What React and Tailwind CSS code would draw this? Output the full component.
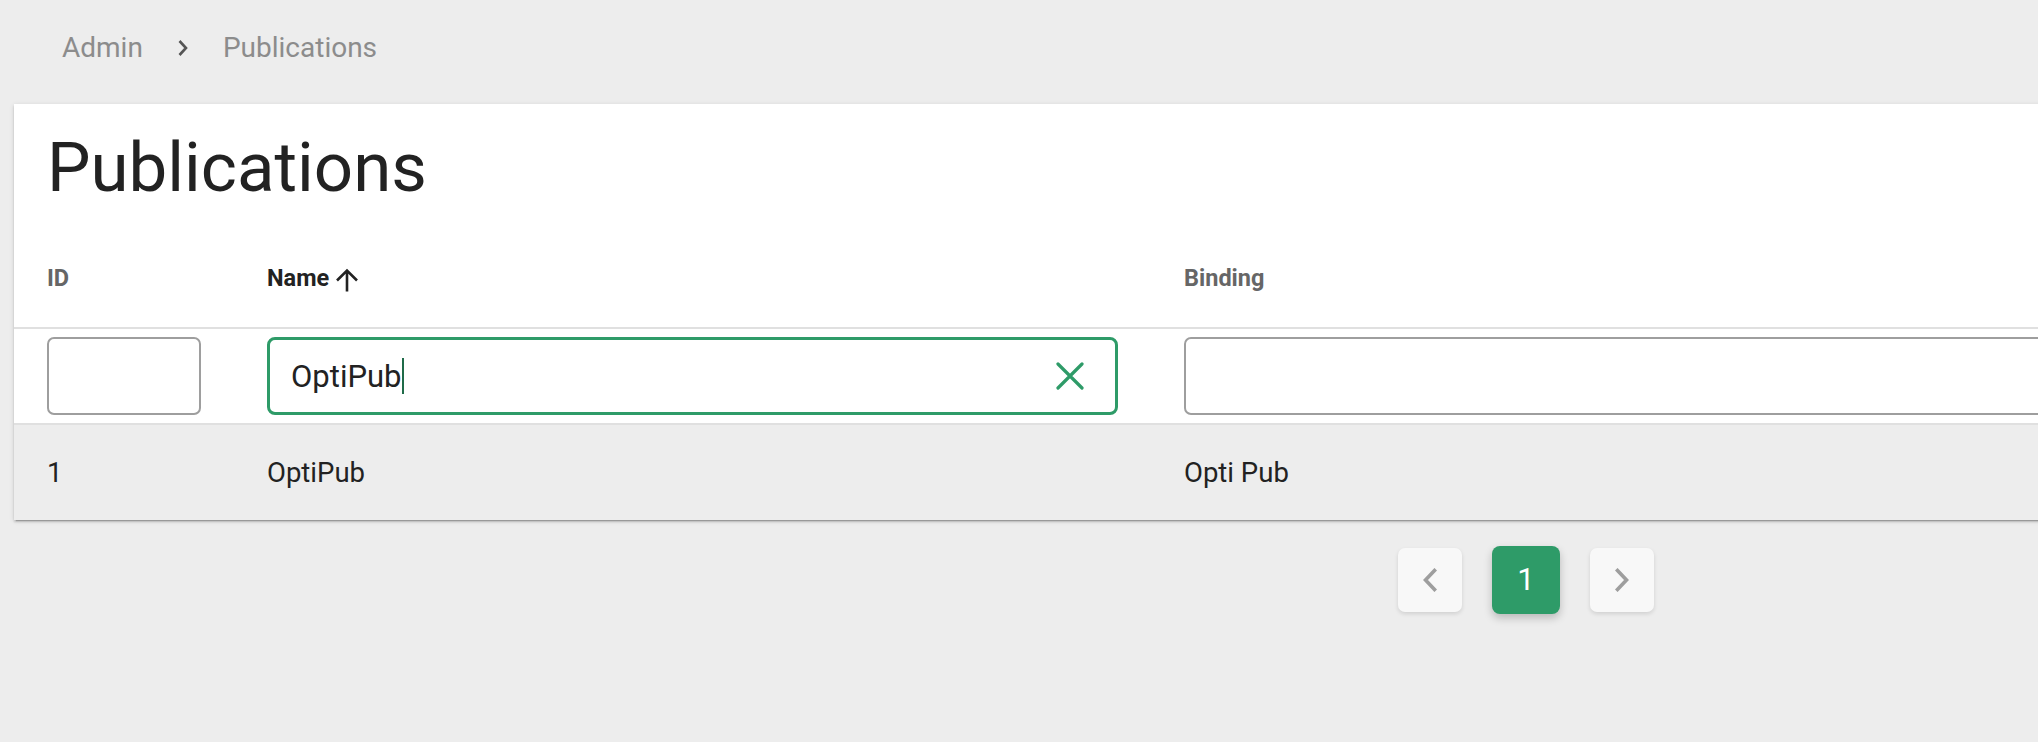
import React from "react";

const Chevron = ({ dir = "right", className = "" }) => (
  <svg width="14" height="24" viewBox="0 0 14 24" className={className} fill="none" stroke="currentColor" strokeWidth="3.6" strokeLinecap="square">
    {dir === "right" ? <path d="M2.5 2.5 L11.5 12 L2.5 21.5" /> : <path d="M11.5 2.5 L2.5 12 L11.5 21.5" />}
  </svg>
);

export default function App() {
  return (
    <div className="min-h-screen w-[3052px] bg-[#ededed] px-[14px] font-['Roboto',sans-serif]">
      {/* breadcrumb */}
      <div className="h-[104px] pt-[31px] pl-[48px] flex items-start gap-[35px] text-[28px] leading-[34px] text-[#8c8c8c]">
        <span>Admin</span>
        <svg width="10" height="34" viewBox="0 0 10 34" fill="none" stroke="#555" strokeWidth="2.6" className="shrink-0">
          <path d="M1.5 10 L8 17 L1.5 24" />
        </svg>
        <span>Publications</span>
      </div>

      {/* card */}
      <div className="bg-white shadow-[0_2px_2px_0_rgba(0,0,0,0.14),0_3px_1px_-2px_rgba(0,0,0,0.2),0_1px_5px_0_rgba(0,0,0,0.12)]">
        <h1 className="px-[33px] pt-[29px] pb-[27px] text-[69px] leading-[70px] text-[#222] font-normal">Publications</h1>

        <div className="grid grid-cols-[220px_917px_1fr] h-[99px] items-center border-b-2 border-[#e0e0e0] text-[23.5px] font-bold">
          <div className="px-[33px] text-[#666]">ID</div>
          <div className="px-[33px] text-[#222] flex items-center gap-[6px]">
            <span>Name</span>
            <svg width="24" height="24" viewBox="0 0 24 24" fill="none" stroke="#222" strokeWidth="2.6" className="mt-[2px]">
              <path d="M12 23.5 V2.5 M2 12.5 L12 2.5 L22 12.5" />
            </svg>
          </div>
          <div className="px-[33px] text-[#666]">Binding</div>
        </div>

        <div className="grid grid-cols-[220px_917px_1fr] h-[96px] items-center border-b-2 border-[#e0e0e0]">
          <div className="px-[33px]">
            <div className="h-[78px] w-full rounded-[7px] border-2 border-[#9e9e9e]" />
          </div>
          <div className="px-[33px]">
            <div className="h-[78px] w-full rounded-[8px] border-[3px] border-[#2e9b68] flex items-center pl-[21px] pr-[31px]">
              <span className="text-[31px] text-[#222] leading-none">OptiPub</span>
              <span className="w-[2px] h-[36px] bg-[#1f6b49] ml-[1px]" />
              <span className="flex-1" />
              <svg width="28" height="28" viewBox="0 0 28 28" fill="none" stroke="#2e9b68" strokeWidth="3.2" strokeLinecap="round">
                <path d="M2 2 L26 26 M26 2 L2 26" />
              </svg>
            </div>
          </div>
          <div className="px-[33px]">
            <div className="h-[78px] w-full rounded-[7px] border-2 border-[#9e9e9e]" />
          </div>
        </div>

        <div className="grid grid-cols-[220px_917px_1fr] h-[95px] items-center bg-[#ededed] text-[27.5px] text-[#222]">
          <div className="px-[33px]">1</div>
          <div className="px-[33px]">OptiPub</div>
          <div className="px-[33px]">Opti Pub</div>
        </div>
      </div>

      {/* pagination */}
      <div className="flex justify-center items-center gap-[30px] mt-[26px]">
        <button className="w-[64px] h-[64px] rounded-[7px] bg-[#f8f8f8] text-[#9e9e9e] flex items-center justify-center shadow-[0_2px_4px_rgba(0,0,0,0.12)]">
          <Chevron dir="left" />
        </button>
        <button className="w-[68px] h-[68px] rounded-[8px] bg-[#2e9b68] text-white text-[31px] flex items-center justify-center shadow-[0_4px_8px_rgba(0,0,0,0.22)]">
          1
        </button>
        <button className="w-[64px] h-[64px] rounded-[7px] bg-[#f8f8f8] text-[#9e9e9e] flex items-center justify-center shadow-[0_2px_4px_rgba(0,0,0,0.12)]">
          <Chevron dir="right" />
        </button>
      </div>
    </div>
  );
}
